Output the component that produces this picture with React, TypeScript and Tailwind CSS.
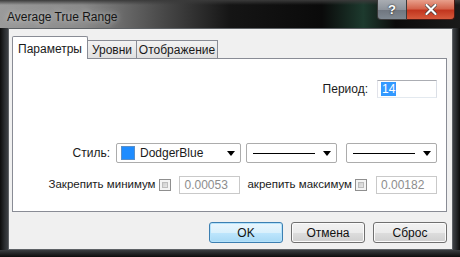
import React from "react";

function Arrow() {
  return (
    <svg width="8" height="5" viewBox="0 0 8 5" className="shrink-0">
      <path d="M0 0 H8 L4 5 Z" fill="#000" />
    </svg>
  );
}

function LineCombo() {
  return (
    <div className="w-[91px] h-[20px] bg-white border border-[#acacac] rounded-[2px] flex items-center pl-[6px] pr-[5px]">
      <div className="w-[62px] h-px bg-black" />
      <div className="ml-auto">
        <Arrow />
      </div>
    </div>
  );
}

function Check() {
  return (
    <div className="w-[12px] h-[12px] border border-[#8f8f8f] bg-[#f4f4f4] p-[2px] shrink-0">
      <div className="w-full h-full bg-[linear-gradient(135deg,#cfcfcf,#e6e6e6)] border border-[#bdbdbd]" />
    </div>
  );
}

function DisabledInput({ value }: { value: string }) {
  return (
    <div className="w-[61px] h-[18px] bg-white border border-[#c9c9c9] flex items-center pl-[4px] text-[#8d8d8d]">
      {value}
    </div>
  );
}

function Button({ label, primary }: { label: string; primary?: boolean }) {
  return (
    <div
      className={
        primary
          ? "w-[74px] h-[21px] rounded-[3px] border border-[#3c7fb1] bg-[linear-gradient(#eaf6fd_0%,#d9f0fc_50%,#bee6fd_51%,#a7d9f5_100%)] flex items-center justify-center text-[#111] shadow-[inset_0_0_0_1px_#b4e2fb]"
          : "w-[74px] h-[21px] rounded-[3px] border border-[#707070] bg-[linear-gradient(#f2f2f2_0%,#ebebeb_50%,#dddddd_51%,#cfcfcf_100%)] flex items-center justify-center text-[#111] shadow-[inset_0_0_0_1px_#fbfbfb]"
      }
    >
      {label}
    </div>
  );
}

export default function App() {
  return (
    <div className="w-[460px] h-[257px] bg-[#141414] flex flex-col overflow-hidden font-['Liberation_Sans',Arial,sans-serif] text-[12px] text-[#1a1a1a]">
      {/* Title bar */}
      <div className="h-[28px] relative flex items-start bg-[linear-gradient(to_right,#9a9a9a_0%,#8a8a8a_18%,#4a4a4a_35%,#151515_50%,#0a0a0a_70%,#1d3a2e_79%,#0b0b0b_86%,#1a1a1a_100%)]">
        <div className="absolute inset-x-0 top-0 h-[5px] bg-[linear-gradient(#3a3a3a,transparent)]" />
        <span className="relative ml-[7px] mt-[8px] text-[12px] text-[#151515] [text-shadow:0_0_6px_rgba(230,230,230,0.9)]">
          Average True Range
        </span>
        <div className="relative ml-auto mr-[5px] flex h-[20px]">
          <div className="w-[30px] h-[20px] rounded-bl-[4px] border border-[#3a3a3a] border-t-0 bg-[linear-gradient(#a9adb3_0%,#8d939b_50%,#6f757e_51%,#7f8891_100%)] flex items-center justify-center text-white font-bold text-[13px] [text-shadow:0_0_2px_#000]">
            ?
          </div>
          <div className="w-[48px] h-[20px] rounded-br-[4px] border border-[#4a1a14] border-t-0 border-l-0 bg-[linear-gradient(#e8a08c_0%,#d4654d_45%,#c2361f_55%,#d65a3c_100%)] flex items-center justify-center">
            <svg width="12" height="11" viewBox="0 0 12 11">
              <path d="M1.5 1 L10.5 10 M10.5 1 L1.5 10" stroke="#333" strokeWidth="3.4" strokeLinecap="round" />
              <path d="M1.5 1 L10.5 10 M10.5 1 L1.5 10" stroke="#fff" strokeWidth="2.2" strokeLinecap="round" />
            </svg>
          </div>
        </div>
      </div>

      {/* Body */}
      <div className="flex-1 flex">
        <div className="w-[8px] bg-[linear-gradient(to_right,#0c0c0c,#2b2e31_60%,#3d4044)]" />
        <div className="flex-1 bg-[#f0f0f0] border border-[#5e6266] flex flex-col pl-[3px] pr-[5px] pt-[7px]">
          {/* Tabs */}
          <div className="flex items-end h-[22px]">
            <div className="relative z-10 w-[76px] h-[23px] -mb-px bg-white border border-b-0 border-[#898c95] rounded-t-[2px] flex items-center justify-center pt-[1px]">
              Параметры
            </div>
            <div className="w-[49px] h-[18px] bg-[linear-gradient(#f2f2f2,#e0e0e0)] border border-b-0 border-l-0 border-[#898c95] flex items-center justify-center pt-[1px]">
              Уровни
            </div>
            <div className="w-[81px] h-[18px] bg-[linear-gradient(#f2f2f2,#e0e0e0)] border border-b-0 border-l-0 border-[#898c95] flex items-center justify-center pt-[1px]">
              Отображение
            </div>
          </div>

          {/* Panel */}
          <div className="h-[154px] bg-white border border-[#898c95] flex flex-col pr-[9px]">
            <div className="mt-[21px] h-[18px] flex items-center justify-end gap-[9px]">
              <span>Период:</span>
              <div className="w-[60px] h-[18px] bg-white border border-[#abadb3] border-b-[#e3e9ef] border-l-[#e2e3ea] border-r-[#dbdfe6] flex items-center pl-[3px]">
                <span className="bg-[#3399ff] text-white leading-[14px] px-[1px]">14</span>
              </div>
            </div>

            <div className="mt-[45px] h-[20px] flex items-center justify-end">
              <span className="mr-[6px]">Стиль:</span>
              <div className="w-[125px] h-[20px] bg-white border border-[#acacac] rounded-[2px] flex items-center pl-[4px] pr-[5px]">
                <div className="w-[14px] h-[14px] bg-[#1e8cff] border border-[#5a8fc8]" />
                <span className="ml-[5px]">DodgerBlue</span>
                <div className="ml-auto">
                  <Arrow />
                </div>
              </div>
              <div className="ml-[5px]">
                <LineCombo />
              </div>
              <div className="ml-[9px]">
                <LineCombo />
              </div>
            </div>

            <div className="mt-[13px] h-[18px] flex items-center justify-end">
              <span className="text-[11.5px]">Закрепить минимум</span>
              <div className="ml-[4px]">
                <Check />
              </div>
              <div className="ml-[8px]">
                <DisabledInput value="0.00053" />
              </div>
              <span className="ml-[7px] text-[11.5px]">акрепить максимум</span>
              <div className="ml-[3px]">
                <Check />
              </div>
              <div className="ml-[9px]">
                <DisabledInput value="0.00182" />
              </div>
            </div>
          </div>

          {/* Buttons */}
          <div className="mt-[10px] flex justify-end gap-[8px]">
            <Button label="OK" primary />
            <Button label="Отмена" />
            <Button label="Сброс" />
          </div>
        </div>
        <div className="w-[7px] bg-[linear-gradient(to_left,#0c0c0c,#2b2e31_60%,#3d4044)]" />
      </div>
      <div className="h-[7px] bg-[linear-gradient(#3a3d40,#0c0c0c)]" />
    </div>
  );
}
